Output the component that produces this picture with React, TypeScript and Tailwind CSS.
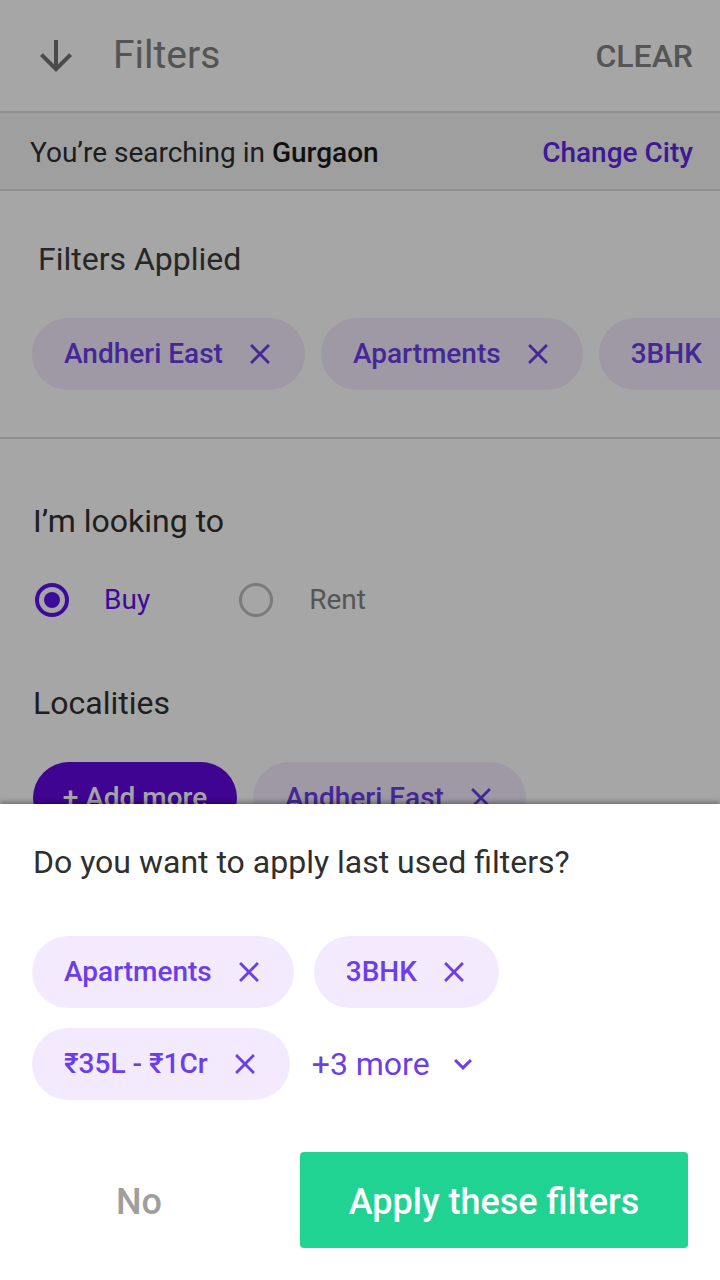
import React from "react";

const CloseIcon = ({ color }: { color: string }) => (
  <svg width="34" height="34" viewBox="0 0 24 24" className="shrink-0">
    <path
      fill={color}
      d="M19 6.41L17.59 5 12 10.59 6.41 5 5 6.41 10.59 12 5 17.59 6.41 19 12 13.41 17.59 19 19 17.59 13.41 12z"
    />
  </svg>
);

const Chip = ({ label }: { label: string }) => (
  <div className="flex h-[72px] shrink-0 items-center rounded-full bg-[#f3ebfd] pl-[32px] pr-[28px]">
    <span className="text-[28px] font-medium text-[#6b3ee8] leading-none">{label}</span>
    <span className="ml-[20px] flex items-center">
      <CloseIcon color="#6b3ee8" />
    </span>
  </div>
);

export default function App() {
  return (
    <div className="relative h-[1280px] w-[720px] overflow-hidden bg-white font-['Roboto',sans-serif]">
      {/* underlying page */}
      <div className="flex flex-col">
        <div className="flex h-[113px] items-center border-b-2 border-[#dcdcdc] pr-[27px]">
          <svg width="48" height="48" viewBox="0 0 24 24" className="ml-[32px] shrink-0">
            <path
              fill="#737373"
              d="M20 12l-1.41-1.41L13 16.17V4h-2v12.17l-5.58-5.59L4 12l8 8 8-8z"
            />
          </svg>
          <span className="ml-[33px] text-[39px] leading-none text-[#818181]">Filters</span>
          <span className="ml-auto text-[32px] font-medium leading-none text-[#838383]">CLEAR</span>
        </div>
        <div className="flex h-[78px] items-center justify-between border-b-2 border-[#dcdcdc] bg-[#f5f5f5] pl-[30px] pr-[27px] pt-[3px]">
          <span className="text-[28px] leading-none text-[#2e2e2e]">
            You’re searching in <span className="font-medium text-[#1a1a1a]">Gurgaon</span>
          </span>
          <span className="text-[28px] font-medium leading-none text-[#5f27e8]">Change City</span>
        </div>
        <div className="flex flex-col border-b-2 border-[#dcdcdc] pb-[47px] pt-[49px]">
          <span className="pl-[38px] text-[32px] leading-[38px] text-[#3c3c3c]">Filters Applied</span>
          <div className="mt-[40px] flex gap-[16px] overflow-hidden pl-[32px]">
            <Chip label="Andheri East" />
            <Chip label="Apartments" />
            <Chip label="3BHK" />
          </div>
        </div>
        <div className="flex flex-col pl-[33px]">
          <span className="mt-[63px] text-[32px] leading-[38px] text-[#303030]">I’m looking to</span>
          <div className="mt-[43px] flex h-[34px] items-center">
            <span className="ml-[2px] flex h-[34px] w-[34px] items-center justify-center rounded-full border-[4px] border-[#6010ec]">
              <span className="h-[16px] w-[16px] rounded-full bg-[#6010ec]" />
            </span>
            <span className="ml-[35px] text-[28px] leading-none text-[#6010ec]">Buy</span>
            <span className="ml-[89px] h-[34px] w-[34px] rounded-full border-[3px] border-[#bdbdbd]" />
            <span className="ml-[36px] text-[28px] leading-none text-[#838383]">Rent</span>
          </div>
          <span className="mt-[67px] text-[32px] leading-[38px] text-[#303030]">Localities</span>
          <div className="mt-[40px] flex gap-[16px]">
            <div className="flex h-[72px] w-[204px] items-center justify-center rounded-full bg-[#6207e0]">
              <span className="text-[28px] font-medium leading-none text-white">+ Add more</span>
            </div>
            <Chip label="Andheri East" />
          </div>
        </div>
      </div>

      {/* dim overlay */}
      <div className="absolute inset-0 bg-black/35" />

      {/* bottom sheet */}
      <div className="absolute bottom-0 left-0 right-0 flex h-[476px] flex-col bg-white shadow-[0_-2px_5px_rgba(0,0,0,0.35)]">
        <span className="ml-[33px] mt-[39px] text-[32px] leading-[38px] text-[#2f2f2f]">
          Do you want to apply last used filters?
        </span>
        <div className="ml-[32px] mt-[55px] flex flex-col gap-[20px]">
          <div className="flex gap-[20px]">
            <Chip label="Apartments" />
            <Chip label="3BHK" />
          </div>
          <div className="flex items-center gap-[20px]">
            <Chip label="₹35L - ₹1Cr" />
            <div className="flex items-center pl-[2px]">
              <span className="text-[32px] leading-none text-[#6b3ee8]">+3 more</span>
              <svg width="36" height="36" viewBox="0 0 24 24" className="ml-[15px]">
                <path fill="#6b3ee8" d="M16.59 8.59L12 13.17 7.41 8.59 6 10l6 6 6-6z" />
              </svg>
            </div>
          </div>
        </div>
        <div className="mt-[52px] flex items-center pl-[32px] pr-[32px]">
          <div className="flex h-[96px] w-[214px] items-center justify-center pt-[3px]">
            <span className="text-[36px] font-medium leading-none text-[#9e9e9e]">No</span>
          </div>
          <div className="ml-auto flex h-[96px] w-[388px] items-center justify-center rounded-[4px] bg-[#20d392] pt-[3px]">
            <span className="text-[36px] font-medium leading-none text-white">Apply these filters</span>
          </div>
        </div>
      </div>
    </div>
  );
}
